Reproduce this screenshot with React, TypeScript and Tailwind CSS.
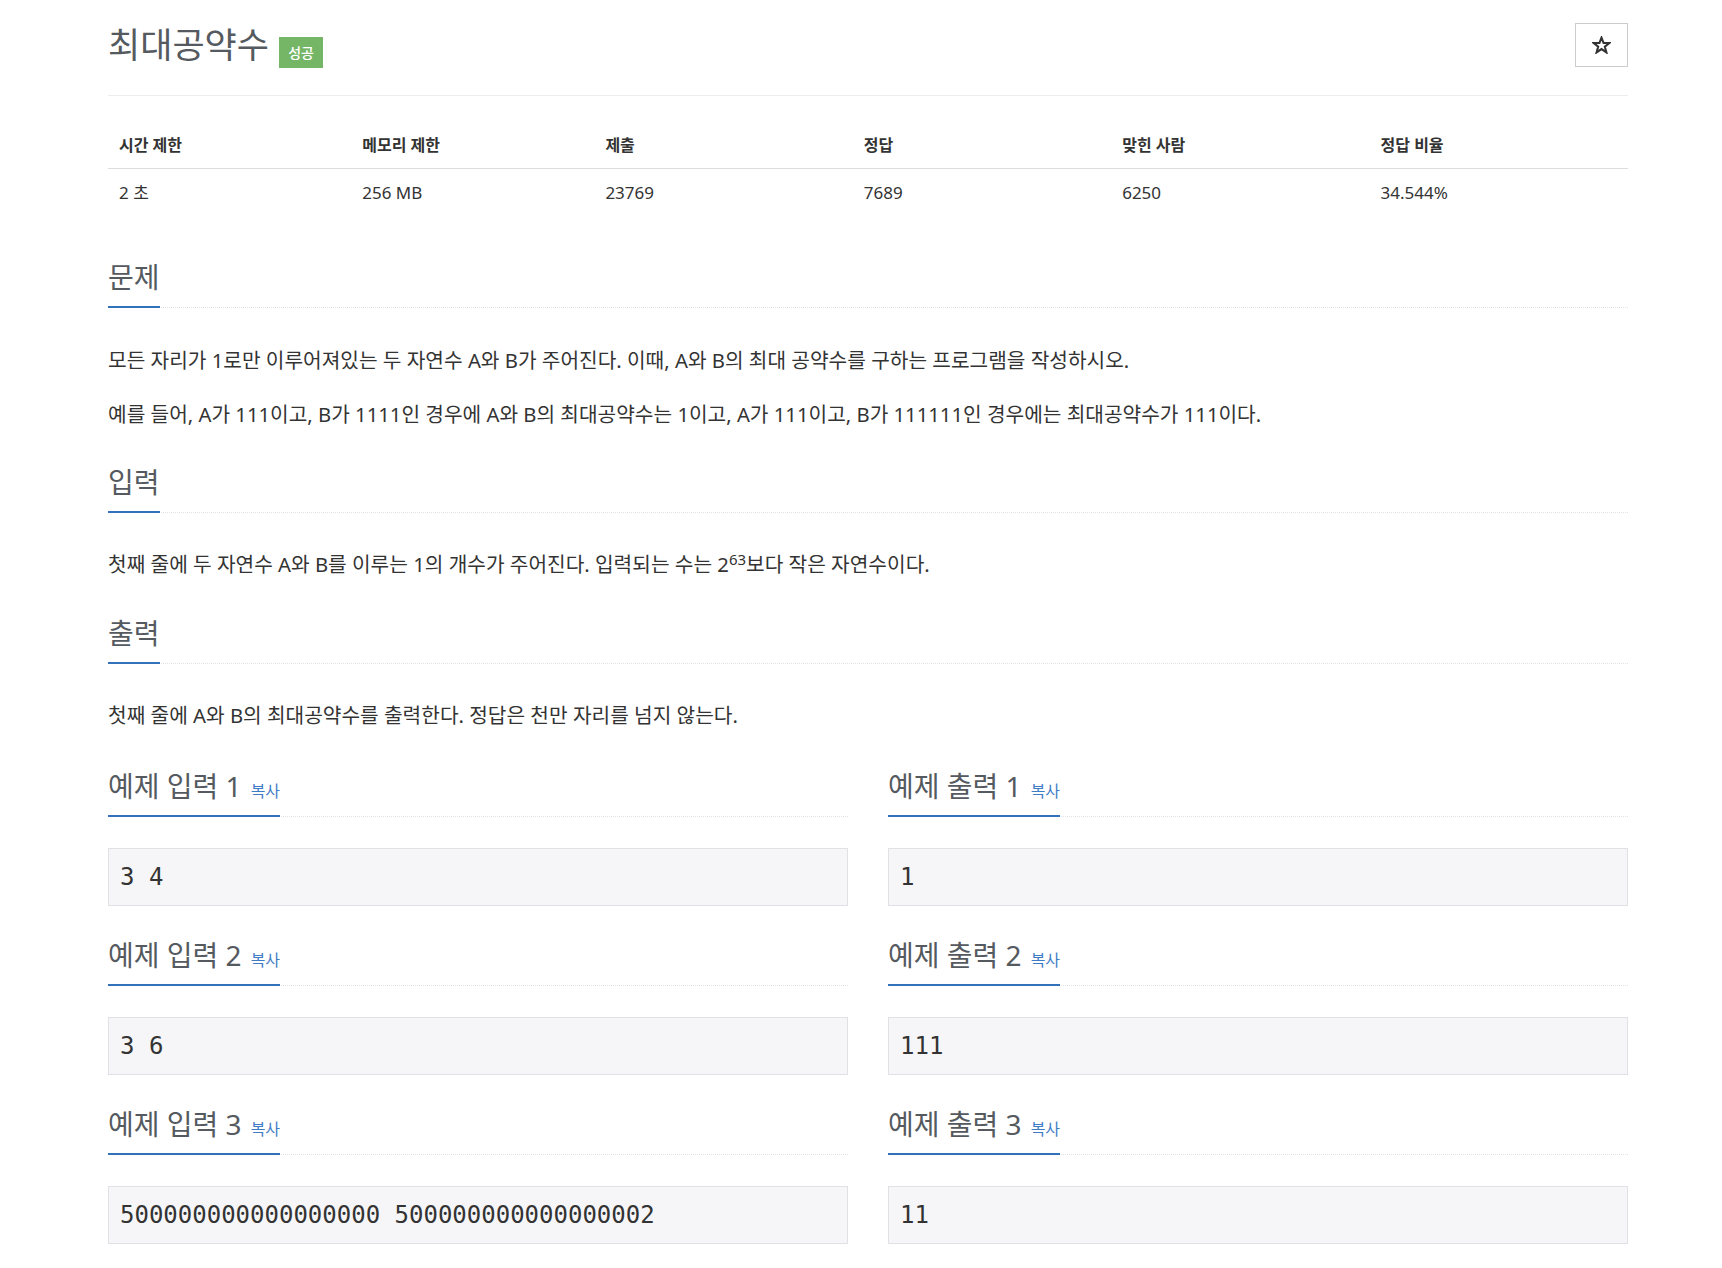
import React from "react";

const KR = "font-['Noto_Sans','Noto_Sans_CJK_KR',sans-serif]";

const stats = [
  { label: "시간 제한", value: "2 초", w: "w-[16%]" },
  { label: "메모리 제한", value: "256 MB", w: "w-[16%]" },
  { label: "제출", value: "23769", w: "w-[17%]" },
  { label: "정답", value: "7689", w: "w-[17%]" },
  { label: "맞힌 사람", value: "6250", w: "w-[17%]" },
  { label: "정답 비율", value: "34.544%", w: "w-[17%]" },
];

const samples = [
  { input: "3 4", output: "1" },
  { input: "3 6", output: "111" },
  { input: "500000000000000000 500000000000000002", output: "11" },
];

function Headline({ children, copy }: { children: React.ReactNode; copy?: boolean }) {
  return (
    <div className="flex border-b border-dotted border-[#dfe3e8]">
      <h2 className="-mb-px inline-flex items-baseline border-b-2 border-[#3272bb] pb-[11px] text-[28px] font-normal leading-[36px] text-[#555a60]">
        {children}
        {copy && <span className="ml-[9px] text-[16px] leading-[20px] text-[#3f7cc6]">복사</span>}
      </h2>
    </div>
  );
}

function Sample({ title, value }: { title: string; value: string }) {
  return (
    <div className="mt-[31px] first:mt-0">
      <Headline copy>{title}</Headline>
      <pre className="mt-[31px] border border-[#e0e0e6] bg-[#f6f6f8] px-[11px] py-[11px] font-['DejaVu_Sans_Mono',monospace] text-[24px] leading-[34px] text-[#333]">
        {value}
      </pre>
    </div>
  );
}

function Star() {
  return (
    <svg width="19" height="18" viewBox="0 0 24 23" fill="none" stroke="#333" strokeWidth="2.6" strokeLinejoin="miter">
      <polygon points="12,2 14.6,8.8 22,9 16.2,13.6 18.3,21 12,16.7 5.7,21 7.8,13.6 2,9 9.4,8.8" />
    </svg>
  );
}

const para = "text-[20.25px] leading-[30px] text-[#333]";

export default function App() {
  return (
    <div className={`min-h-screen bg-white ${KR}`}>
      <div className="ml-[108px] w-[1520px] pt-[23px] pb-[26px]">
        <div className="flex h-[44px] items-center justify-between">
          <div className="flex items-center">
            <h1 className="text-[35px] font-normal leading-[44px] text-[#555a60]">최대공약수</h1>
            <span className="ml-[10px] mt-[14px] flex h-[31px] w-[44px] items-center justify-center bg-[#74b566] text-[14px] font-medium text-white">
              성공
            </span>
          </div>
          <button className="flex h-[44px] w-[53px] items-center justify-center border border-[#cccccc] bg-white">
            <Star />
          </button>
        </div>
        <div className="mt-[28px] border-t border-[#eeeeee]" />

        <table className="mt-[26px] w-full table-fixed text-left text-[17px] text-[#333]">
          <thead>
            <tr className="border-b border-[#dddddd]">
              {stats.map((s) => (
                <th key={s.label} className={`${s.w} h-[46px] px-[11px] text-[16px] font-bold`}>{s.label}</th>
              ))}
            </tr>
          </thead>
          <tbody>
            <tr>
              {stats.map((s) => (
                <td key={s.label} className="h-[48px] px-[11px]">{s.value}</td>
              ))}
            </tr>
          </tbody>
        </table>

        <section className="mt-[43px]">
          <Headline>문제</Headline>
          <p className={`mt-[37px] ${para}`}>
            모든 자리가 1로만 이루어져있는 두 자연수 A와 B가 주어진다. 이때, A와 B의 최대 공약수를 구하는 프로그램을 작성하시오.
          </p>
          <p className={`mt-[24px] ${para}`}>
            예를 들어, A가 111이고, B가 1111인 경우에 A와 B의 최대공약수는 1이고, A가 111이고, B가 111111인 경우에는 최대공약수가 111이다.
          </p>
        </section>

        <section className="mt-[35px]">
          <Headline>입력</Headline>
          <p className={`mt-[36px] ${para}`}>
            첫째 줄에 두 자연수 A와 B를 이루는 1의 개수가 주어진다. 입력되는 수는 2<sup className="text-[15px]">63</sup>보다 작은 자연수이다.
          </p>
        </section>

        <section className="mt-[36px]">
          <Headline>출력</Headline>
          <p className={`mt-[36px] ${para}`}>
            첫째 줄에 A와 B의 최대공약수를 출력한다. 정답은 천만 자리를 넘지 않는다.
          </p>
        </section>

        <div className="mt-[38px] grid grid-cols-2 gap-x-[40px]">
          <div>
            {samples.map((s, i) => (
              <Sample key={i} title={`예제 입력 ${i + 1}`} value={s.input} />
            ))}
          </div>
          <div>
            {samples.map((s, i) => (
              <Sample key={i} title={`예제 출력 ${i + 1}`} value={s.output} />
            ))}
          </div>
        </div>
      </div>
    </div>
  );
}
